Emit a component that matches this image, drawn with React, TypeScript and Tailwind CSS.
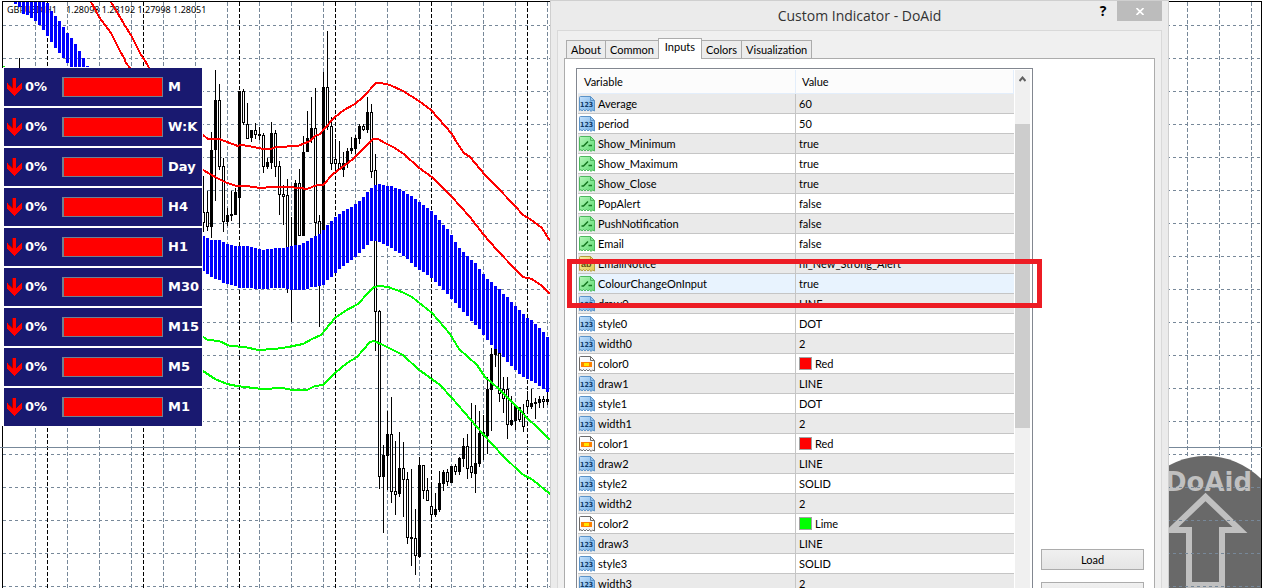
import { useState } from 'react';

type Candle = [x: number, high: number, low: number, top: number, bottom: number, filled: 0 | 1];

const CANDLES: Candle[] = [
  [203, 176, 232, 212, 223, 0],
  [207, 191, 231, 212, 227, 0],
  [211, 132, 238, 150, 227, 1],
  [215, 70, 201, 100, 150, 1],
  [219, 84, 170, 100, 167, 0],
  [223, 158, 232, 166, 222, 0],
  [227, 208, 226, 215, 222, 1],
  [231, 191, 221, 214, 216, 1],
  [235, 188, 215, 192, 215, 1],
  [239, 91, 226, 91, 198, 1],
  [243, 89, 125, 91, 123, 0],
  [247, 103, 139, 124, 139, 0],
  [251, 130, 142, 130, 138, 1],
  [255, 123, 139, 130, 135, 0],
  [259, 127, 140, 134, 136, 1],
  [263, 133, 173, 135, 167, 0],
  [267, 158, 169, 162, 167, 1],
  [271, 122, 169, 133, 163, 1],
  [275, 130, 177, 133, 167, 0],
  [279, 161, 215, 166, 195, 0],
  [283, 185, 225, 194, 197, 0],
  [287, 179, 293, 195, 250, 0],
  [291, 217, 322, 260, 262, 1],
  [295, 180, 245, 183, 245, 1],
  [299, 169, 236, 183, 236, 0],
  [303, 136, 236, 152, 236, 1],
  [307, 111, 150, 138, 152, 1],
  [311, 97, 143, 128, 139, 1],
  [315, 88, 240, 128, 223, 0],
  [319, 215, 327, 221, 235, 0],
  [323, 72, 232, 87, 232, 1],
  [327, 31, 130, 87, 127, 0],
  [331, 117, 170, 126, 164, 0],
  [335, 139, 170, 159, 164, 0],
  [339, 141, 169, 163, 170, 0],
  [343, 152, 177, 163, 170, 1],
  [347, 148, 168, 151, 164, 1],
  [351, 137, 154, 148, 151, 1],
  [355, 135, 154, 138, 149, 1],
  [359, 124, 144, 126, 139, 1],
  [363, 124, 131, 126, 130, 0],
  [367, 97, 133, 112, 130, 1],
  [371, 104, 178, 112, 172, 0],
  [375, 154, 351, 170, 312, 0],
  [379, 310, 489, 311, 477, 0],
  [383, 445, 533, 455, 477, 1],
  [387, 411, 490, 434, 456, 1],
  [391, 397, 503, 434, 492, 0],
  [395, 441, 515, 491, 495, 0],
  [399, 432, 497, 468, 494, 1],
  [403, 442, 517, 468, 480, 0],
  [407, 472, 544, 479, 538, 0],
  [411, 469, 566, 537, 539, 1],
  [415, 509, 575, 538, 556, 0],
  [419, 457, 558, 465, 557, 1],
  [423, 465, 499, 465, 491, 0],
  [427, 478, 501, 490, 501, 0],
  [431, 486, 522, 506, 515, 0],
  [435, 493, 517, 509, 515, 1],
  [439, 471, 512, 483, 510, 1],
  [443, 470, 491, 472, 484, 1],
  [447, 469, 486, 472, 482, 0],
  [451, 466, 483, 466, 483, 1],
  [455, 464, 475, 466, 472, 0],
  [459, 457, 475, 458, 472, 1],
  [463, 438, 467, 446, 459, 1],
  [467, 434, 479, 446, 469, 0],
  [471, 403, 478, 466, 473, 0],
  [475, 405, 493, 463, 474, 1],
  [479, 411, 467, 433, 464, 1],
  [483, 415, 460, 432, 436, 1],
  [487, 377, 454, 389, 436, 1],
  [491, 348, 431, 354, 390, 1],
  [495, 349, 367, 349, 355, 1],
  [499, 353, 402, 353, 394, 0],
  [503, 377, 413, 389, 399, 0],
  [507, 377, 439, 389, 425, 0],
  [511, 396, 426, 420, 425, 1],
  [515, 405, 430, 406, 421, 1],
  [519, 407, 422, 407, 420, 0],
  [523, 404, 432, 413, 427, 0],
  [527, 391, 412, 400, 407, 0],
  [531, 389, 409, 403, 407, 1],
  [535, 398, 419, 402, 404, 1],
  [539, 396, 408, 399, 403, 1],
  [543, 396, 408, 399, 402, 0],
  [547, 392, 405, 399, 402, 1]
];

// cloud bars sit 4px apart, one [top, bottom] pair per bar
const CLOUD_EARLY: [number, number][] = [
  [2, 4], [2, 7], [2, 14], [2, 15], [2, 18], [2, 21], [2, 25], [2, 30], [3, 36], [11, 42],
  [16, 48], [21, 53], [27, 58], [33, 63], [38, 67], [44, 67], [51, 67], [58, 67], [66, 67]
];

const CLOUD_MAIN: [number, number][] = [
  [236, 271], [238, 274], [240, 277], [240, 279], [240, 280], [242, 283], [244, 284], [245, 285],
  [246, 286], [246, 288], [246, 288], [246, 288], [247, 288], [248, 289], [249, 289], [250, 289],
  [249, 289], [249, 288], [248, 288], [248, 288], [248, 288], [247, 289], [246, 290], [245, 290],
  [245, 290], [243, 290], [241, 289], [238, 287], [236, 287], [234, 286], [230, 285], [225, 280],
  [221, 277], [217, 273], [214, 269], [211, 266], [209, 263], [207, 260], [204, 257], [201, 253],
  [197, 249], [192, 245], [188, 241], [185, 241], [184, 242], [185, 244], [186, 246], [186, 248],
  [188, 251], [189, 253], [191, 256], [194, 259], [196, 263], [199, 267], [202, 270], [205, 272],
  [208, 275], [211, 278], [215, 282], [220, 286], [225, 290], [229, 294], [235, 299], [242, 303],
  [248, 308], [252, 312], [256, 316], [260, 321], [263, 325], [269, 329], [274, 335], [279, 340],
  [282, 345], [286, 349], [289, 353], [294, 357], [297, 362], [302, 366], [306, 370], [310, 374],
  [314, 377], [318, 379], [320, 381], [324, 383], [328, 386], [332, 389], [337, 392]
];

const RED_LINES = [
  '91,2 96,11 99,17 105,25 111,33 115,41 120,51 124,58 126,63 130,68',
  '111,2 117,12 124,24 132,37 140,53 147,64 149,68',
  '203,135 208,139 219,139 227,142 238,146 240,145 249,146 263,149 270,149 277,147 298,146 310,141 315,136 320,134 324,129 335,117 344,110 355,104 363,97 376,83 381,83 390,85 403,91 419,101 431,110 438,118 452,134 457,143 464,153 470,157 485,175 495,185 515,206 523,215 530,219 542,228 550,241',
  '203,170 210,174 217,178 227,183 237,186 247,186 260,188 273,187 287,187 300,188 307,189 317,185 323,185 333,174 345,165 353,159 360,152 373,139 378,139 385,143 395,148 405,155 418,167 433,178 452,197 470,217 483,234 497,250 515,269 523,277 532,279 542,286 550,294'
];

const GREEN_LINES = [
  '203,337 208,340 219,341 230,346 245,347 258,350 275,349 288,347 303,344 312,339 321,335 325,330 335,318 345,311 358,304 368,293 374,287 380,286 388,287 402,292 412,297 432,313 450,334 459,349 477,365 485,377 499,389 517,407 530,421 535,425 550,440',
  '203,371 215,379 227,384 237,386 262,389 283,388 292,390 307,390 315,386 323,385 335,373 347,363 357,357 370,342 374,341 383,345 403,355 418,369 440,385 452,398 483,434 503,456 522,474 533,480 550,494'
];

const GRID_X = Array.from({ length: 39 }, (_, i) => 35 + i * 32);
const GRID_Y = Array.from({ length: 18 }, (_, i) => 25 + i * 33);
const DAY_X = [47, 143, 239, 335, 431, 527];

const TIMEFRAMES = ['M', 'W:K', 'Day', 'H4', 'H1', 'M30', 'M15', 'M5', 'M1'];
const TABS = ['About', 'Common', 'Inputs', 'Colors', 'Visualization'];

type Kind = 'int' | 'bool' | 'string' | 'color';
type InputRow = { name: string; value: string; kind: Kind; selected?: boolean };

const INPUTS: InputRow[] = [
  { name: 'Average', value: '60', kind: 'int' },
  { name: 'period', value: '50', kind: 'int' },
  { name: 'Show_Minimum', value: 'true', kind: 'bool' },
  { name: 'Show_Maximum', value: 'true', kind: 'bool' },
  { name: 'Show_Close', value: 'true', kind: 'bool' },
  { name: 'PopAlert', value: 'false', kind: 'bool' },
  { name: 'PushNotification', value: 'false', kind: 'bool' },
  { name: 'Email', value: 'false', kind: 'bool' },
  { name: 'EmailNotice', value: 'hi_New_Strong_Alert', kind: 'string' },
  { name: 'ColourChangeOnInput', value: 'true', kind: 'bool', selected: true },
  { name: 'draw0', value: 'LINE', kind: 'int' },
  { name: 'style0', value: 'DOT', kind: 'int' },
  { name: 'width0', value: '2', kind: 'int' },
  { name: 'color0', value: 'Red', kind: 'color' },
  { name: 'draw1', value: 'LINE', kind: 'int' },
  { name: 'style1', value: 'DOT', kind: 'int' },
  { name: 'width1', value: '2', kind: 'int' },
  { name: 'color1', value: 'Red', kind: 'color' },
  { name: 'draw2', value: 'LINE', kind: 'int' },
  { name: 'style2', value: 'SOLID', kind: 'int' },
  { name: 'width2', value: '2', kind: 'int' },
  { name: 'color2', value: 'Lime', kind: 'color' },
  { name: 'draw3', value: 'LINE', kind: 'int' },
  { name: 'style3', value: 'SOLID', kind: 'int' },
  { name: 'width3', value: '2', kind: 'int' }
];

const ICON_COLORS: Record<Kind, { from: string; to: string; edge: string }> = {
  int: { from: '#c4e0fb', to: '#6eaee6', edge: '#5b93c8' },
  bool: { from: '#b4f5b9', to: '#5fdc74', edge: '#4cb85e' },
  string: { from: '#f6ecaa', to: '#e0c94e', edge: '#b39f3c' },
  color: { from: '#ffffff', to: '#f1f1f1', edge: '#6b6b6b' }
};

function cloudBars(bars: [number, number][], start: number) {
  return bars.map(([top, bottom], i) => (
    <rect key={start + i * 4} x={start + i * 4 - 1} y={top} width={3} height={bottom - top} fill="#0000ff" />
  ));
}

function Chart() {
  return (
    <svg width="1262" height="588" viewBox="0 0 1262 588" className="absolute left-0 top-0" shapeRendering="crispEdges">
      <circle cx="1206" cy="534" r="78" fill="#696969" shapeRendering="auto" />
      <text x="1165" y="491" fontSize="26" fontWeight="700" fill="#c0c0c0" fontFamily='"DejaVu Sans", sans-serif'>
        DoAid
      </text>
      <path
        d="M1205.5 497 L1240 530 H1222 V585 H1189 V530 H1171 Z"
        fill="none"
        stroke="#c0c0c0"
        strokeWidth="6"
        shapeRendering="auto"
      />
      <g stroke="#778899">
        {GRID_X.map((x) => (
          <line
            key={x}
            x1={x + 0.5}
            x2={x + 0.5}
            y1="2"
            y2={x > 1180 && x < 1240 ? 456 : x > 1240 ? 471 : 588}
            strokeDasharray="4 2"
          />
        ))}
        {GRID_Y.map((y) => (
          <line key={y} x1="3" x2="1261" y1={y + 0.5} y2={y + 0.5} strokeDasharray="3 3" />
        ))}
      </g>
      <g stroke="#000" strokeDasharray="4 2">
        {DAY_X.map((x) => (
          <line key={x} x1={x + 0.5} x2={x + 0.5} y1="2" y2="588" />
        ))}
      </g>
      <path d="M2.5 588 V1.5 H1261.5 V588" fill="none" stroke="#000" />
      <line x1="0" x2="1262" y1="447.5" y2="447.5" stroke="#778899" />
      <text x="7" y="13" fontSize="9" fill="#000" fontFamily='"Noto Sans", sans-serif'>
        {'GBPUSD,H1\u00a0\u00a0\u00a0\u00a01.28098 1.28192 1.27998 1.28051'}
      </text>
      <rect x="19" y="58" width="1" height="10" fill="#000" />
      <rect x="3" y="66" width="2" height="1" fill="#00ff00" />
      {CANDLES.map(([x, high, low, top, bottom, filled]) => (
        <g key={x}>
          <rect x={x} y={high} width={1} height={low - high} fill="#000" />
          <rect x={x - 1} y={top} width={3} height={bottom - top} fill="#000" />
          {!filled && <rect x={x} y={top + 1} width={1} height={Math.max(bottom - top - 2, 1)} fill="#fff" />}
        </g>
      ))}
      {cloudBars(CLOUD_EARLY, 15)}
      {cloudBars(CLOUD_MAIN, 203)}
      <g fill="none" strokeWidth="2" strokeLinejoin="round">
        {RED_LINES.map((points) => (
          <polyline key={points} points={points} stroke="#ff0000" />
        ))}
        {GREEN_LINES.map((points) => (
          <polyline key={points} points={points} stroke="#00ff00" />
        ))}
      </g>
    </svg>
  );
}

function TimeframePanel() {
  return (
    <ul className="mt-[68px] flex w-[203px] shrink-0 flex-col gap-[2px] self-start bg-white pr-px pl-1 font-['DejaVu_Sans',sans-serif] text-[13px] font-bold text-white">
      {TIMEFRAMES.map((label) => (
        <li key={label} className="flex h-[38px] items-center bg-[#191970] pl-[3px]">
          <svg width="15" height="18" viewBox="0 0 15 18" className="shrink-0">
            <path
              d="M6 0 H9 V10 L15 5 V10.5 L7.5 18 L0 10.5 V5 L6 10 Z"
              fill="#ff0000"
              shapeRendering="crispEdges"
            />
            <path d="M5.5 0 V10 L1 6" fill="none" stroke="#a00000" />
          </svg>
          <span className="ml-[3px] w-[37px]">0%</span>
          <span className="h-5 w-[101px] border border-l-2 border-[#708090] bg-[#ff0000]" />
          <span className="ml-[5px]">{label}</span>
        </li>
      ))}
    </ul>
  );
}

function TypeIcon({ kind }: { kind: Kind }) {
  const { from, to, edge } = ICON_COLORS[kind];
  return (
    <svg width="16" height="16" viewBox="0 0 16 16" className="shrink-0">
      <defs>
        <linearGradient id={`icon-${kind}`} x1="0" y1="0" x2="1" y2="1">
          <stop offset="0" stopColor={from} />
          <stop offset="1" stopColor={to} />
        </linearGradient>
      </defs>
      <path
        d="M0.5 1.5 Q0.5 0.5 1.5 0.5 H11.5 L15.5 4.5 V15 L13.5 14 L12 15.5 L10.5 13.5 L9 15 L7.5 13.5 L6 15 L4.5 13.5 L3 15 L2 13.5 L0.5 14.5 Z"
        fill={`url(#icon-${kind})`}
        stroke={edge}
      />
      <path d="M11.5 0.5 V4.5 H15.5" fill="none" stroke={edge} />
      {kind === 'int' && (
        <text x="1" y="11" fontSize="7" fontWeight="700" fill="#123a66" fontFamily='"DejaVu Sans Condensed", "Liberation Sans", sans-serif'>
          123
        </text>
      )}
      {kind === 'string' && (
        <text x="2" y="11" fontSize="9" fontWeight="700" fill="#5f4f0c" fontFamily='"Liberation Sans", sans-serif'>
          ab
        </text>
      )}
      {kind === 'bool' && <path d="M2.5 10 H4.5 L9 5.5 M9.5 9.5 H13" fill="none" stroke="#14751f" strokeWidth="1.5" />}
      {kind === 'color' && (
        <>
          <rect x="2" y="6" width="11" height="5" fill="#ff8000" />
          <rect x="5" y="7" width="5" height="3" fill="#ffe500" />
        </>
      )}
    </svg>
  );
}

function InputsTable() {
  return (
    <div className="flex w-[457px] shrink-0 border border-b-0 border-[#828790] pt-px pr-[2px] pl-px">
      <table className="w-[436px] table-fixed border-separate border-spacing-0 self-start text-left">
        <thead>
          <tr>
            <th className="h-6 w-[218px] border-r border-b border-[#e3eefb] bg-[#fcfcfc] p-0 pl-1.5 font-normal">Variable</th>
            <th className="h-6 border-r border-b border-[#e3eefb] bg-[#fcfcfc] p-0 pl-1.5 font-normal">Value</th>
          </tr>
        </thead>
        <tbody>
          {INPUTS.map((row) => (
            <tr key={row.name} className={row.selected ? 'bg-[#e8f3fe]' : 'odd:bg-[#eaeaea] even:bg-white'}>
              <td className="h-5 border-r border-b border-[#c5c5c5] p-0 pl-px">
                <div className="flex items-center gap-[3px]">
                  <TypeIcon kind={row.kind} />
                  {row.name}
                </div>
              </td>
              <td className="h-5 border-b border-[#c5c5c5] p-0 pl-[3px]">
                <div className="flex items-center gap-[3px]">
                  {row.kind === 'color' && (
                    <span
                      className={`h-[13px] w-[13px] border border-[#a0a0a0] ${row.value === 'Red' ? 'bg-[#ff0000]' : 'bg-[#00ff00]'}`}
                    />
                  )}
                  {row.value}
                </div>
              </td>
            </tr>
          ))}
        </tbody>
      </table>
      <div className="ml-px flex w-[15px] flex-col bg-[#f0f0f0]">
        <button aria-label="Scroll up" className="flex h-[54px] shrink-0 items-start justify-center pt-1.5">
          <svg width="7" height="6" viewBox="0 0 7 6">
            <path d="M0.5 5 L3.5 1.5 L6.5 5" fill="none" stroke="#606060" strokeWidth="2" />
          </svg>
        </button>
        <div className="h-[304px] shrink-0 bg-[#cdcdcd]" />
      </div>
    </div>
  );
}

function IndicatorDialog() {
  const [tab, setTab] = useState('Inputs');

  return (
    <section
      role="dialog"
      aria-labelledby="dialog-title"
      className="mr-[93px] ml-auto flex w-[619px] shrink-0 flex-col border border-b-0 border-[#cfcfcf] bg-[#ebebeb] px-1.5 font-[Lato,sans-serif] text-[11px] leading-4 text-black"
    >
      <header className="relative flex h-[29px] shrink-0 items-center justify-center">
        <h1 id="dialog-title" className="font-['Open_Sans',sans-serif] text-sm text-[#333]">
          Custom Indicator - DoAid
        </h1>
        <div className="absolute top-0 right-0 flex">
          <button className="mr-2 h-5 w-3 font-['Open_Sans',sans-serif] text-sm font-bold">?</button>
          <button aria-label="Close" className="flex h-5 w-[45px] items-center justify-center bg-[#bcbcbc]">
            <svg width="8" height="7" viewBox="0 0 8 7">
              <path d="M0.5 0 L7.5 7 M7.5 0 L0.5 7" stroke="#fff" strokeWidth="1.6" />
            </svg>
          </button>
        </div>
      </header>
      <div className="flex grow flex-col border border-b-0 border-[#d9d9d9] bg-[#f0f0f0] px-1.5 pt-[7px]">
        <div role="tablist" className="relative flex items-end pl-[2px]">
          {TABS.map((name) => (
            <button
              key={name}
              role="tab"
              aria-selected={tab === name}
              onClick={() => setTab(name)}
              className={
                tab === name
                  ? '-mx-px -mb-px h-[21px] border border-b-0 border-[#acacac] bg-white px-1.5 pb-1'
                  : 'h-[18px] border border-b-0 border-[#acacac] bg-[#ececec] px-1 [&+&]:border-l-0'
              }
            >
              {name}
            </button>
          ))}
        </div>
        <div className="flex grow items-stretch border border-b-0 border-[#acacac] bg-white pt-[9px] pr-[10px] pl-[11px]">
          <div className="relative flex">
            <InputsTable />
            <div className="pointer-events-none absolute top-[191px] -right-[9px] -left-[9px] h-[49px] border-5 border-[#ed1c24]" />
          </div>
          <div className="flex grow flex-col gap-3 pt-[481px] pl-2">
            <button className="h-[21px] shrink-0 border border-[#acacac] bg-linear-to-b from-[#f0f0f0] to-[#e5e5e5]">Load</button>
            <button
              aria-label="Save"
              className="h-[21px] shrink-0 border border-[#acacac] bg-linear-to-b from-[#f0f0f0] to-[#e5e5e5]"
            />
          </div>
        </div>
      </div>
    </section>
  );
}

export default function App() {
  return (
    <main className="relative flex h-screen overflow-hidden bg-white">
      <Chart />
      <div className="relative flex w-full">
        <TimeframePanel />
        <IndicatorDialog />
      </div>
    </main>
  );
}
